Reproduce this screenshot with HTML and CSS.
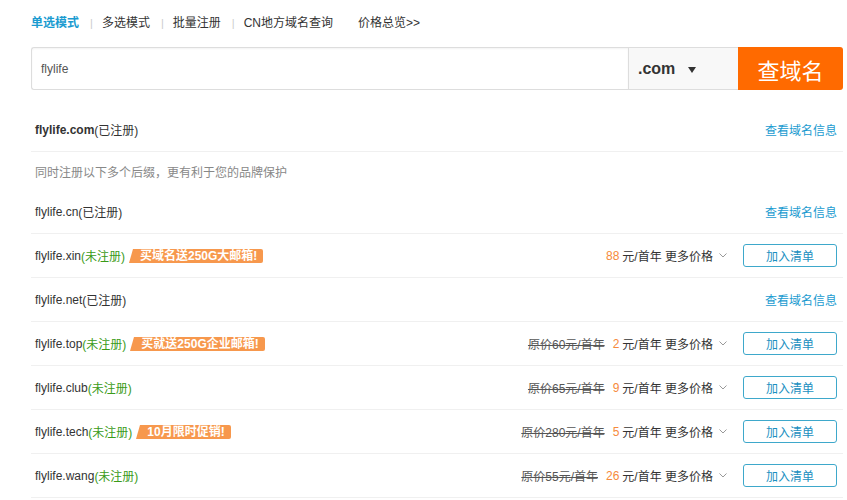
FILE: index.html
```html
<!DOCTYPE html>
<html lang="zh-CN">
<head>
<meta charset="utf-8">
<title>域名查询</title>
<link rel="stylesheet" href="styles.css">
</head>
<body>
<div class="page">
  <nav class="tabs">
    <a class="tab active">单选模式</a><span class="sep">|</span>
    <a class="tab">多选模式</a><span class="sep">|</span>
    <a class="tab">批量注册</a><span class="sep">|</span>
    <a class="tab">CN地方域名查询</a>
    <a class="tab overview">价格总览&gt;&gt;</a>
  </nav>

  <div class="search">
    <div class="input">flylife</div>
    <div class="suffix"><span>.com</span><i class="caret"></i></div>
    <button class="go">查域名</button>
  </div>

  <ul class="list">
    <li class="row">
      <div class="name"><b>flylife.com</b><span class="st">(已注册)</span></div>
      <a class="info">查看域名信息</a>
    </li>
    <li class="hint">同时注册以下多个后缀，更有利于您的品牌保护</li>
    <li class="row">
      <div class="name">flylife.cn<span class="st">(已注册)</span></div>
      <a class="info">查看域名信息</a>
    </li>
    <li class="row">
      <div class="name">flylife.xin<span class="st free">(未注册)</span><span class="tag">买域名送250G大邮箱!</span></div>
      <div class="buy">
        <span class="price"><em>88</em> 元/首年 更多价格<svg class="chev" width="8" height="5" viewBox="0 0 8 5"><polyline points="0.5,0.5 4,4 7.5,0.5" fill="none" stroke="#999" stroke-width="1"/></svg></span>
        <button class="add">加入清单</button>
      </div>
    </li>
    <li class="row">
      <div class="name">flylife.net<span class="st">(已注册)</span></div>
      <a class="info">查看域名信息</a>
    </li>
    <li class="row">
      <div class="name">flylife.top<span class="st free">(未注册)</span><span class="tag">买就送250G企业邮箱!</span></div>
      <div class="buy">
        <span class="price"><s>原价60元/首年</s><em>2</em> 元/首年 更多价格<svg class="chev" width="8" height="5" viewBox="0 0 8 5"><polyline points="0.5,0.5 4,4 7.5,0.5" fill="none" stroke="#999" stroke-width="1"/></svg></span>
        <button class="add">加入清单</button>
      </div>
    </li>
    <li class="row">
      <div class="name">flylife.club<span class="st free">(未注册)</span></div>
      <div class="buy">
        <span class="price"><s>原价65元/首年</s><em>9</em> 元/首年 更多价格<svg class="chev" width="8" height="5" viewBox="0 0 8 5"><polyline points="0.5,0.5 4,4 7.5,0.5" fill="none" stroke="#999" stroke-width="1"/></svg></span>
        <button class="add">加入清单</button>
      </div>
    </li>
    <li class="row">
      <div class="name">flylife.tech<span class="st free">(未注册)</span><span class="tag">10月限时促销!</span></div>
      <div class="buy">
        <span class="price"><s>原价280元/首年</s><em>5</em> 元/首年 更多价格<svg class="chev" width="8" height="5" viewBox="0 0 8 5"><polyline points="0.5,0.5 4,4 7.5,0.5" fill="none" stroke="#999" stroke-width="1"/></svg></span>
        <button class="add">加入清单</button>
      </div>
    </li>
    <li class="row">
      <div class="name">flylife.wang<span class="st free">(未注册)</span></div>
      <div class="buy">
        <span class="price"><s>原价55元/首年</s><em>26</em> 元/首年 更多价格<svg class="chev" width="8" height="5" viewBox="0 0 8 5"><polyline points="0.5,0.5 4,4 7.5,0.5" fill="none" stroke="#999" stroke-width="1"/></svg></span>
        <button class="add">加入清单</button>
      </div>
    </li>
  </ul>
</div>
</body>
</html>
```

FILE: styles.css
```css
* { box-sizing: border-box; }
html, body { margin: 0; padding: 0; background: #fff; }
body {
  font-family: "Liberation Sans", "Noto Sans CJK SC", sans-serif;
  font-size: 12px;
  color: #333;
}
.page {
  width: 843px;
  padding: 14px 0 0 31px;
}
.tabs {
  display: flex;
  align-items: center;
  height: 18px;
  line-height: 18px;
}
.tab { color: #333; cursor: pointer; }
.tab.active { color: #1a9bd0; font-weight: bold; }
.sep { color: #ccc; margin: 0 9px 0 11px; font-size: 11px; }
.tab.overview { margin-left: 25px; }

.search {
  display: flex;
  margin-top: 15px;
  height: 43px;
}
.input {
  flex: 1;
  border: 1px solid #ddd;
  border-right: none;
  border-radius: 3px 0 0 3px;
  padding-left: 9px;
  display: flex;
  align-items: center;
  color: #555;
  font-size: 12px;
  box-shadow: inset 0 1px 2px rgba(0,0,0,0.05);
}
.suffix {
  width: 110px;
  border: 1px solid #ddd;
  border-right: none;
  background: #f8f8f8;
  display: flex;
  align-items: center;
  padding-left: 9px;
  font-size: 16px;
  font-weight: bold;
  color: #333;
}
.caret {
  width: 0; height: 0;
  border-left: 4.5px solid transparent;
  border-right: 4.5px solid transparent;
  border-top: 6px solid #333;
  margin-left: 13px;
  margin-top: 2px;
}
.go {
  width: 105px;
  border: none;
  border-radius: 0 3px 3px 0;
  background: #ff6a00;
  color: #fff;
  font-family: "Noto Sans CJK SC", sans-serif;
  font-size: 22px;
  padding: 0;
}

.list {
  list-style: none;
  margin: 18px 0 0;
  padding: 0;
}
.row {
  display: flex;
  align-items: center;
  justify-content: space-between;
  height: 44px;
  border-bottom: 1px solid #f0f0f0;
  padding: 0 6px 0 4px;
}
.hint {
  height: 38px;
  display: flex;
  align-items: center;
  padding-left: 4px;
  color: #888;
}
.name { display: flex; align-items: center; color: #333; }
.name b { font-weight: bold; }
.st { color: #333; }
.st.free { color: #3a9b18; }
.tag {
  position: relative;
  margin-left: 8px;
  background: #f7984d;
  color: #fff;
  font-weight: bold;
  font-size: 12px;
  line-height: 14px;
  height: 14px;
  padding: 0 6px 0 7px;
  border-radius: 0 2px 2px 0;
}
.tag::before {
  content: "";
  position: absolute;
  left: -4px;
  top: 0;
  width: 0; height: 0;
  border-bottom: 14px solid #f7984d;
  border-left: 4px solid transparent;
}
.info { color: #1a9bd0; cursor: pointer; }
.buy { display: flex; align-items: center; }
.price { display: flex; align-items: center; color: #333; }
.price s { color: #555; margin-right: 8px; }
.price em { font-style: normal; color: #f68a3c; margin-right: 3px; }
.chev { margin-left: 6px; }
.add {
  margin-left: 16px;
  width: 94px;
  height: 23px;
  border: 1px solid #3ea8cb;
  border-radius: 3px;
  background: #fff;
  color: #1a8fbf;
  font-family: "Liberation Sans", "Noto Sans CJK SC", sans-serif;
  font-size: 12px;
  padding: 0;
}
```
